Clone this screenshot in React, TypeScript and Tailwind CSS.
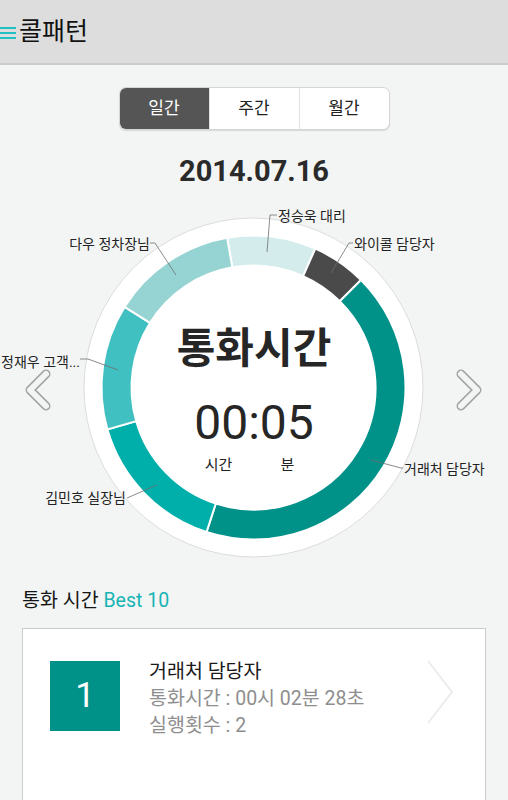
import React from 'react';

const FONT = { fontFamily: 'Roboto, "Noto Sans CJK KR", sans-serif' };

const CX = 253.5;
const CY = 187.5;

type Seg = { name: string; from: number; to: number; color: string };

const segments: Seg[] = [
  { name: '정승욱 대리', from: -10, to: 24, color: '#d5eced' },
  { name: '와이콜 담당자', from: 24, to: 45, color: '#4a4a4a' },
  { name: '거래처 담당자', from: 45, to: 198, color: '#009189' },
  { name: '김민호 실장님', from: 198, to: 254, color: '#00aeaa' },
  { name: '정재우 고객...', from: 254, to: 302, color: '#40c0c0' },
  { name: '다우 정차장님', from: 302, to: 350, color: '#96d4d4' },
];

const labels = [
  { text: '정승욱 대리', x: 278, y: 16, anchor: 'start', line: '267,52 270,15 277,15' },
  { text: '와이콜 담당자', x: 354, y: 44, anchor: 'start', line: '331,73 349,43 353,43' },
  { text: '거래처 담당자', x: 404, y: 269, anchor: 'start', line: '371,260 401,268 403,268' },
  { text: '김민호 실장님', x: 126, y: 298, anchor: 'end', line: '157,285 127,298' },
  { text: '정재우 고객...', x: 80, y: 162, anchor: 'end', line: '80,159 88,159 118,170' },
  { text: '다우 정차장님', x: 150, y: 44, anchor: 'end', line: '150,43 155,43 176,75' },
];

function pt(a: number, r: number) {
  const rad = (a * Math.PI) / 180;
  return `${(CX + r * Math.sin(rad)).toFixed(2)} ${(CY - r * Math.cos(rad)).toFixed(2)}`;
}

function arcPath(a1: number, a2: number, r1: number, r2: number) {
  const large = a2 - a1 > 180 ? 1 : 0;
  return `M ${pt(a1, r2)} A ${r2} ${r2} 0 ${large} 1 ${pt(a2, r2)} L ${pt(a2, r1)} A ${r1} ${r1} 0 ${large} 0 ${pt(a1, r1)} Z`;
}

function HollowChevron({ dir }: { dir: 'left' | 'right' }) {
  const d = dir === 'left' ? 'M22 5 L6 21 L22 37' : 'M6 5 L22 21 L6 37';
  return (
    <svg width="28" height="42" viewBox="0 0 28 42">
      <path d={d} fill="none" stroke="#a3a3a3" strokeWidth="9" strokeLinecap="round" strokeLinejoin="round" />
      <path d={d} fill="none" stroke="#f3f5f4" strokeWidth="6" strokeLinecap="round" strokeLinejoin="round" />
    </svg>
  );
}

const ranking = [
  { rank: 1, name: '거래처 담당자', time: '00시 02분 28초', count: 2, color: 'bg-[#009189]' },
  { rank: 2, name: '김민호 실장님', time: '00시 01분 12초', count: 1, color: 'bg-[#00aeaa]' },
];

export default function App() {
  return (
    <div className="min-h-[800px] w-[508px] overflow-hidden bg-[#f3f5f4]" style={FONT}>
      <header className="flex h-[65px] items-center border-b-2 border-[#cbcbcb] bg-[#dddddd]">
        <div className="flex w-[17px] flex-col gap-[3px] pt-[2px]">
          <span className="h-[2px] w-[16px] bg-[#1fc0c4]" />
          <span className="h-[2px] w-[16px] bg-[#1fc0c4]" />
          <span className="h-[2px] w-[16px] bg-[#1fc0c4]" />
        </div>
        <h1 className="ml-[2px] text-[25px] leading-none text-[#111]">콜패턴</h1>
      </header>

      <div className="mx-auto mt-[22px] flex h-[43px] w-[271px] overflow-hidden rounded-[7px] border border-[#d6d6d6] bg-white text-[17px] shadow-[0_1px_1px_rgba(0,0,0,0.12)]">
        <button className="flex-1 bg-[#555555] text-white">일간</button>
        <button className="flex-1 border-l border-[#e2e2e2] text-[#222]">주간</button>
        <button className="flex-1 border-l border-[#e2e2e2] text-[#222]">월간</button>
      </div>

      <p className="mt-[23px] h-[36px] text-center text-[29px] font-bold leading-[36px] text-[#2a2a2a]">2014.07.16</p>

      <div className="relative mt-[11px] h-[388px]">
        <svg width="508" height="388" viewBox="0 0 508 388" className="block">
          <circle cx={CX} cy={CY} r="169.5" fill="#fff" stroke="#dcdcdc" strokeWidth="1" />
          {segments.map((s) => (
            <path key={s.name} d={arcPath(s.from, s.to, 122, 152)} fill={s.color} stroke="#fff" strokeWidth="2" />
          ))}
          {labels.map((l) => (
            <g key={l.text}>
              <polyline points={l.line} fill="none" stroke="#6f6f6f" strokeWidth="0.8" />
              <text
                x={l.x}
                y={l.y}
                textAnchor={l.anchor as 'start' | 'end'}
                dominantBaseline="central"
                fontSize="14"
                fill="#222"
                style={FONT}
              >
                {l.text}
              </text>
            </g>
          ))}
        </svg>

        <div className="absolute left-0 top-[125px] flex w-[508px] flex-col items-center">
          <p className="text-[42px] font-bold leading-[48px] text-[#262626]">통화시간</p>
          <p className="mt-[26px] text-[48px] leading-[48px] text-[#262626]">00:05</p>
          <div className="mt-[9px] flex gap-[48px] pr-[9px] text-[15px] leading-[18px] text-[#222]">
            <span>시간</span>
            <span>분</span>
          </div>
        </div>

        <button className="absolute left-[24px] top-[169px]">
          <HollowChevron dir="left" />
        </button>
        <button className="absolute left-[455px] top-[169px]">
          <HollowChevron dir="right" />
        </button>
      </div>

      <h2 className="ml-[22px] text-[19.5px] leading-[26px] text-[#151515]">
        통화 시간 <span className="text-[#17b4b4]">Best 10</span>
      </h2>

      <div className="mx-[22px] mt-[14px] border border-[#cccccc] bg-white">
        {ranking.map((r) => (
          <div key={r.rank} className="flex items-start pb-[35px] pl-[27px] pr-[30px] pt-[32px]">
            <div className={`flex h-[70px] w-[70px] items-center justify-center text-[35px] text-white ${r.color}`}>
              {r.rank}
            </div>
            <div className="-mt-[3px] ml-[29px] flex-1 text-[19.5px] leading-[27px]">
              <p className="text-[#1a1a1a]">{r.name}</p>
              <p className="text-[#8e8e8e]">통화시간 : {r.time}</p>
              <p className="text-[#8e8e8e]">실행횟수 : {r.count}</p>
            </div>
            <svg width="30" height="66" viewBox="0 0 30 66" className="mt-[-2px]">
              <path d="M3 2 L27 33 L3 64" fill="none" stroke="#ececec" strokeWidth="2" />
            </svg>
          </div>
        ))}
      </div>
    </div>
  );
}
